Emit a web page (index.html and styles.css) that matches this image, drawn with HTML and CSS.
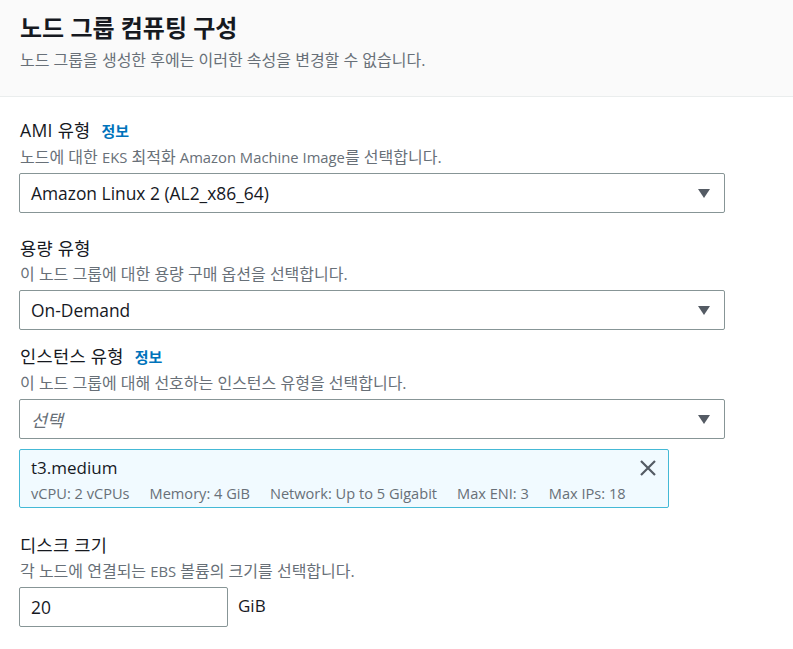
FILE: index.html
```html
<!DOCTYPE html>
<html lang="ko">
<head>
    <meta charset="UTF-8">
    <meta name="viewport" content="width=device-width, initial-scale=1.0">
    <title>노드 그룹 컴퓨팅 구성</title>
    <link rel="stylesheet" href="styles.css">
</head>
<body>
    <div class="panel">
        <div class="panel-header">
            <h2 class="panel-title">노드 그룹 컴퓨팅 구성</h2>
            <p class="panel-desc">노드 그룹을 생성한 후에는 이러한 속성을 변경할 수 없습니다.</p>
        </div>
        <div class="panel-body">
            <div class="field">
                <div class="field-label">AMI 유형 <a class="info" href="#">정보</a></div>
                <div class="field-desc">노드에 대한 <span class="en">EKS</span> 최적화 <span class="en">Amazon Machine Image</span>를 선택합니다.</div>
                <div class="select">
                    <span>Amazon Linux 2 (AL2_x86_64)</span>
                    <span class="caret"></span>
                </div>
            </div>

            <div class="field field-capacity">
                <div class="field-label">용량 유형</div>
                <div class="field-desc">이 노드 그룹에 대한 용량 구매 옵션을 선택합니다.</div>
                <div class="select">
                    <span>On-Demand</span>
                    <span class="caret"></span>
                </div>
            </div>

            <div class="field field-instance">
                <div class="field-label">인스턴스 유형 <a class="info" href="#">정보</a></div>
                <div class="field-desc">이 노드 그룹에 대해 선호하는 인스턴스 유형을 선택합니다.</div>
                <div class="select">
                    <span class="placeholder">선택</span>
                    <span class="caret"></span>
                </div>
                <div class="token">
                    <div class="token-main">
                        <div class="token-name">t3.medium</div>
                        <div class="token-tags">
                            <span>vCPU: 2 vCPUs</span>
                            <span>Memory: 4 GiB</span>
                            <span>Network: Up to 5 Gigabit</span>
                            <span>Max ENI: 3</span>
                            <span>Max IPs: 18</span>
                        </div>
                    </div>
                    <svg class="token-close" width="18" height="18" viewBox="0 0 18 18">
                        <path d="M2 2 L16 16 M16 2 L2 16" stroke="#545b64" stroke-width="2.2" fill="none"/>
                    </svg>
                </div>
            </div>

            <div class="field field-disk">
                <div class="field-label">디스크 크기</div>
                <div class="field-desc">각 노드에 연결되는 <span class="en">EBS</span> 볼륨의 크기를 선택합니다.</div>
                <div class="input-row">
                    <div class="input">20</div>
                    <span class="unit">GiB</span>
                </div>
            </div>
        </div>
    </div>
</body>
</html>
```

FILE: styles.css
```css
* {
    box-sizing: border-box;
}

body {
    margin: 0;
    background-color: #ffffff;
    font-family: "Open Sans", "Noto Sans CJK KR", sans-serif;
    color: #16191f;
}

.panel-header {
    background-color: #fafafa;
    border-bottom: 1px solid #eaeded;
    padding: 12px 20px 0;
    height: 97px;
}

.panel-title {
    margin: 0;
    font-size: 24px;
    font-weight: 700;
    line-height: 32px;
}

.panel-desc {
    margin: 5px 0 0;
    font-size: 16px;
    line-height: 22px;
    color: #687078;
}

.panel-body {
    padding: 21px 19px 16px;
    width: 744px;
}

.field-capacity {
    margin-top: 23px;
}

.field-instance {
    margin-top: 14px;
}

.field-disk {
    margin-top: 25px;
}

.field-label {
    padding-left: 1px;
    font-size: 17.6px;
    letter-spacing: 0.3px;
    line-height: 24px;
}

.info {
    margin-left: 6px;
    font-size: 15px;
    font-weight: 700;
    letter-spacing: 0;
    color: #0073bb;
    text-decoration: none;
}

.field-desc {
    padding-left: 1px;
    margin: 3px 0 5px;
    font-size: 16px;
    line-height: 22px;
    color: #687078;
}

.field-desc .en {
    font-size: 14.8px;
}

.select {
    display: flex;
    justify-content: space-between;
    align-items: center;
    width: 706px;
    height: 40px;
    padding: 0 14px 0 11px;
    border: 1px solid #879596;
    border-radius: 2px;
    font-size: 17.4px;
}

.placeholder {
    font-style: italic;
    color: #687078;
}

.caret {
    width: 0;
    height: 0;
    border-left: 6.5px solid transparent;
    border-right: 6.5px solid transparent;
    border-top: 9px solid #545b64;
}

.token {
    display: flex;
    justify-content: space-between;
    align-items: flex-start;
    width: 650px;
    height: 59px;
    margin-top: 10px;
    padding: 6px 11px 0 11px;
    background-color: #f1faff;
    border: 1px solid #44b9d6;
    border-radius: 2px;
}

.token-name {
    font-size: 17px;
    line-height: 24px;
}

.token-tags {
    display: flex;
    gap: 20px;
    margin-top: 2px;
    font-size: 14.6px;
    line-height: 22px;
    color: #687078;
}

.token-close {
    margin-top: 3px;
}

.input-row {
    display: flex;
    align-items: center;
    gap: 10px;
}

.input {
    width: 209px;
    height: 40px;
    line-height: 38px;
    padding-left: 11px;
    border: 1px solid #879596;
    border-radius: 2px;
    font-size: 17.4px;
}

.unit {
    font-size: 17px;
    margin-top: -4px;
}
```
